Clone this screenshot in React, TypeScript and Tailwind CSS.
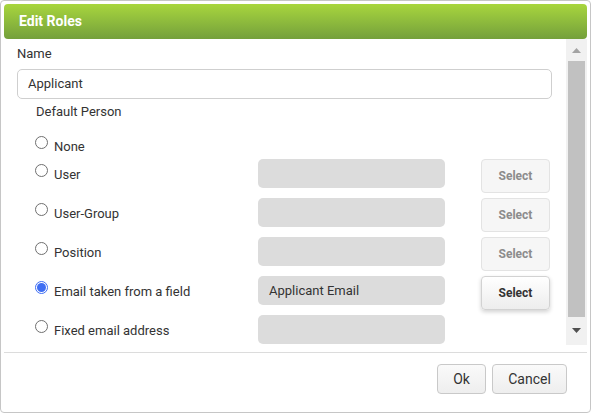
import type { ReactNode } from "react";

interface RoleOption {
  label: string;
  checked?: boolean;
  field?: string;
  hasSelect: boolean;
  active?: boolean;
}

const options: RoleOption[] = [
  { label: "User", hasSelect: true },
  { label: "User-Group", hasSelect: true },
  { label: "Position", hasSelect: true },
  { label: "Email taken from a field", checked: true, field: "Applicant Email", hasSelect: true, active: true },
  { label: "Fixed email address", hasSelect: false },
];

function Radio({ checked }: { checked?: boolean }) {
  if (checked) {
    return (
      <span className="flex h-[13px] w-[13px] shrink-0 items-center justify-center rounded-full border border-[#3f6ef3] bg-white">
        <span className="block h-[9px] w-[9px] rounded-full bg-[#3f6ef3]" />
      </span>
    );
  }
  return <span className="block h-[13px] w-[13px] shrink-0 rounded-full border border-[#6f6f6f] bg-white" />;
}

function RadioLabel({ checked, children }: { checked?: boolean; children: ReactNode }) {
  return (
    <div className="flex w-[222px] shrink-0 items-start pl-[31px]">
      <div className="mt-[5px]">
        <Radio checked={checked} />
      </div>
      <span className="ml-[6px] mt-[7px] text-[13px] leading-[18px] text-[#333]">{children}</span>
    </div>
  );
}

function SelectButton({ active }: { active?: boolean }) {
  if (active) {
    return (
      <button className="ml-[36px] h-[34px] w-[69px] rounded-[4px] border border-[#d2d2d2] bg-gradient-to-b from-white to-[#ededed] text-[12px] font-bold text-[#333] shadow-[0_2px_4px_rgba(0,0,0,0.18)]">
        Select
      </button>
    );
  }
  return (
    <button className="ml-[36px] h-[34px] w-[69px] rounded-[4px] border border-[#e3e3e3] bg-[#f6f6f6] text-[12px] font-bold text-[#8c8c8c]">
      Select
    </button>
  );
}

export default function App() {
  return (
    <div className="h-[413px] w-[591px] bg-white font-['Roboto',sans-serif]">
      <div className="flex h-full w-full flex-col rounded-[4px] border border-[#c6c6c6] p-[3px]">
        <div className="flex h-[35px] shrink-0 items-center rounded-[4px] bg-gradient-to-b from-[#a8d63d] to-[#74a03b] pl-[15px]">
          <span className="text-[14px] font-bold text-white">Edit Roles</span>
        </div>

        <div className="flex h-[306px] shrink-0">
          <div className="flex-1 pl-[13px] pt-[6px]">
            <div className="text-[13px] leading-[18px] text-[#333]">Name</div>
            <div className="mt-[6px] flex h-[30px] w-[535px] items-center rounded-[5px] border border-[#cfcfcf] px-[10px] text-[13px] text-[#333]">
              Applicant
            </div>
            <div className="mt-[4px] pl-[19px] text-[13px] leading-[18px] text-[#333]">Default Person</div>

            <div className="-ml-[13px] mt-[10px] flex h-[28px]">
              <RadioLabel>None</RadioLabel>
            </div>

            <div className="-ml-[13px] flex flex-col">
              {options.map((o) => (
                <div key={o.label} className="flex h-[39px] items-start">
                  <RadioLabel checked={o.checked}>{o.label}</RadioLabel>
                  <div className="ml-[32px] flex h-[29px] w-[187px] shrink-0 items-center rounded-[5px] bg-[#dcdcdc] px-[11px] text-[13px] text-[#333]">
                    {o.field}
                  </div>
                  {o.hasSelect && <SelectButton active={o.active} />}
                </div>
              ))}
            </div>
          </div>

          <div className="flex w-[21px] shrink-0 flex-col items-center bg-[#f1f1f1] pt-[1px]">
            <div className="flex h-[21px] items-center justify-center">
              <svg width="9" height="5" viewBox="0 0 9 5">
                <path d="M0 5 L4.5 0 L9 5 Z" fill="#a3a3a3" />
              </svg>
            </div>
            <div className="h-[256px] w-[17px] bg-[#c1c1c1]" />
            <div className="flex h-[27px] items-center justify-center">
              <svg width="9" height="5" viewBox="0 0 9 5">
                <path d="M0 0 L9 0 L4.5 5 Z" fill="#505050" />
              </svg>
            </div>
          </div>
        </div>

        <div className="mt-[7px] border-t border-[#dcdcdc]" />

        <div className="flex justify-end gap-[6px] pr-[20px] pt-[11px]">
          <button className="h-[30px] w-[49px] rounded-[4px] border border-[#c9c9c9] bg-gradient-to-b from-[#fafafa] to-[#eeeeee] text-[14px] text-[#333]">
            Ok
          </button>
          <button className="h-[30px] w-[75px] rounded-[4px] border border-[#c9c9c9] bg-gradient-to-b from-[#fafafa] to-[#eeeeee] text-[14px] text-[#333]">
            Cancel
          </button>
        </div>
      </div>
    </div>
  );
}
